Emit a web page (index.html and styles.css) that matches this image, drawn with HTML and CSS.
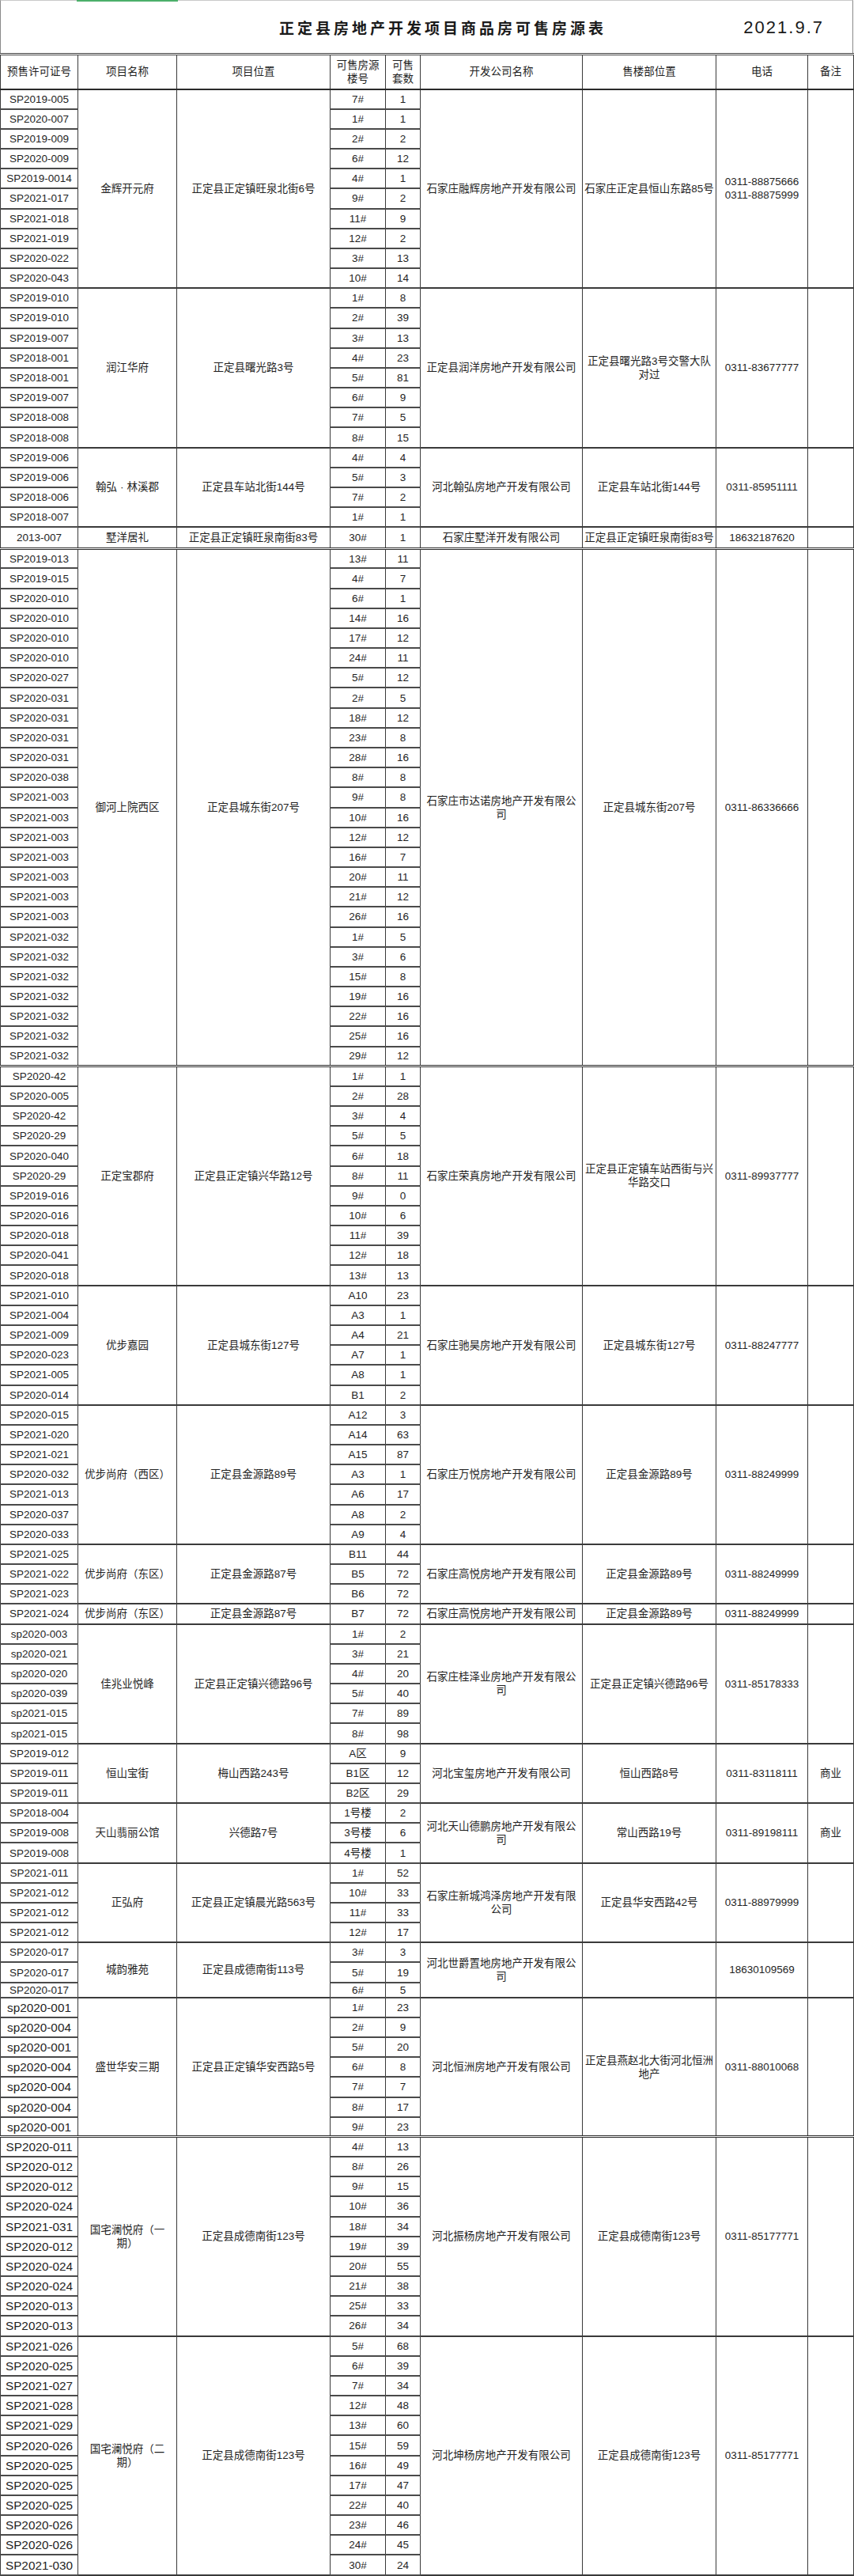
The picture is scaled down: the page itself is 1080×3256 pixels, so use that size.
FILE: index.html
```html
<!DOCTYPE html>
<html lang="zh-CN">
<head>
<meta charset="utf-8">
<title>正定县房地产开发项目商品房可售房源表</title>
<link rel="stylesheet" href="styles.css">
</head>
<body>
<div class="page">
  <div class="titlebar">
    <span class="tab-mark"></span>
    <h1 class="title">正定县房地产开发项目商品房可售房源表</h1>
    <span class="date">2021.9.7</span>
  </div>
  <table class="sheet">
    <colgroup>
      <col class="w-code"><col class="w-name"><col class="w-loc"><col class="w-bld"><col class="w-cnt"><col class="w-co"><col class="w-sale"><col class="w-tel"><col class="w-note">
    </colgroup>
    <thead>
      <tr><th>预售许可证号</th><th>项目名称</th><th>项目位置</th><th>可售房源<br>楼号</th><th>可售<br>套数</th><th>开发公司名称</th><th>售楼部位置</th><th>电话</th><th>备注</th></tr>
    </thead>
    <tbody>
      <tr><td class="code">SP2019-005</td><td rowspan="10">金辉开元府</td><td rowspan="10">正定县正定镇旺泉北街6号</td><td class="bld">7#</td><td class="cnt">1</td><td rowspan="10">石家庄融辉房地产开发有限公司</td><td rowspan="10">石家庄正定县恒山东路85号</td><td rowspan="10">0311-88875666<br>0311-88875999</td><td rowspan="10"></td></tr>
      <tr><td class="code">SP2020-007</td><td class="bld">1#</td><td class="cnt">1</td></tr>
      <tr><td class="code">SP2019-009</td><td class="bld">2#</td><td class="cnt">2</td></tr>
      <tr><td class="code">SP2020-009</td><td class="bld">6#</td><td class="cnt">12</td></tr>
      <tr><td class="code">SP2019-0014</td><td class="bld">4#</td><td class="cnt">1</td></tr>
      <tr><td class="code">SP2021-017</td><td class="bld">9#</td><td class="cnt">2</td></tr>
      <tr><td class="code">SP2021-018</td><td class="bld">11#</td><td class="cnt">9</td></tr>
      <tr><td class="code">SP2021-019</td><td class="bld">12#</td><td class="cnt">2</td></tr>
      <tr><td class="code">SP2020-022</td><td class="bld">3#</td><td class="cnt">13</td></tr>
      <tr><td class="code">SP2020-043</td><td class="bld">10#</td><td class="cnt">14</td></tr>
    </tbody>
    <tbody class="grp">
      <tr><td class="code">SP2019-010</td><td rowspan="8">润江华府</td><td rowspan="8">正定县曙光路3号</td><td class="bld">1#</td><td class="cnt">8</td><td rowspan="8">正定县润洋房地产开发有限公司</td><td rowspan="8">正定县曙光路3号交警大队<br>对过</td><td rowspan="8">0311-83677777</td><td rowspan="8"></td></tr>
      <tr><td class="code">SP2019-010</td><td class="bld">2#</td><td class="cnt">39</td></tr>
      <tr><td class="code">SP2019-007</td><td class="bld">3#</td><td class="cnt">13</td></tr>
      <tr><td class="code">SP2018-001</td><td class="bld">4#</td><td class="cnt">23</td></tr>
      <tr><td class="code">SP2018-001</td><td class="bld">5#</td><td class="cnt">81</td></tr>
      <tr><td class="code">SP2019-007</td><td class="bld">6#</td><td class="cnt">9</td></tr>
      <tr><td class="code">SP2018-008</td><td class="bld">7#</td><td class="cnt">5</td></tr>
      <tr><td class="code">SP2018-008</td><td class="bld">8#</td><td class="cnt">15</td></tr>
    </tbody>
    <tbody class="grp">
      <tr><td class="code">SP2019-006</td><td rowspan="4">翰弘<span class="dot">·</span>林溪郡</td><td rowspan="4">正定县车站北街144号</td><td class="bld">4#</td><td class="cnt">4</td><td rowspan="4">河北翰弘房地产开发有限公司</td><td rowspan="4">正定县车站北街144号</td><td rowspan="4">0311-85951111</td><td rowspan="4"></td></tr>
      <tr><td class="code">SP2019-006</td><td class="bld">5#</td><td class="cnt">3</td></tr>
      <tr><td class="code">SP2018-006</td><td class="bld">7#</td><td class="cnt">2</td></tr>
      <tr><td class="code">SP2018-007</td><td class="bld">1#</td><td class="cnt">1</td></tr>
    </tbody>
    <tbody class="grp">
      <tr class="tall"><td class="code">2013-007</td><td>墅洋居礼</td><td>正定县正定镇旺泉南街83号</td><td class="bld">30#</td><td class="cnt">1</td><td>石家庄墅洋开发有限公司</td><td>正定县正定镇旺泉南街83号</td><td>18632187620</td><td></td></tr>
    </tbody>
    <tbody class="dbl">
      <tr><td class="code">SP2019-013</td><td rowspan="26">御河上院西区</td><td rowspan="26">正定县城东街207号</td><td class="bld">13#</td><td class="cnt">11</td><td rowspan="26">石家庄市达诺房地产开发有限公<br>司</td><td rowspan="26">正定县城东街207号</td><td rowspan="26">0311-86336666</td><td rowspan="26"></td></tr>
      <tr><td class="code">SP2019-015</td><td class="bld">4#</td><td class="cnt">7</td></tr>
      <tr><td class="code">SP2020-010</td><td class="bld">6#</td><td class="cnt">1</td></tr>
      <tr><td class="code">SP2020-010</td><td class="bld">14#</td><td class="cnt">16</td></tr>
      <tr><td class="code">SP2020-010</td><td class="bld">17#</td><td class="cnt">12</td></tr>
      <tr><td class="code">SP2020-010</td><td class="bld">24#</td><td class="cnt">11</td></tr>
      <tr><td class="code">SP2020-027</td><td class="bld">5#</td><td class="cnt">12</td></tr>
      <tr><td class="code">SP2020-031</td><td class="bld">2#</td><td class="cnt">5</td></tr>
      <tr><td class="code">SP2020-031</td><td class="bld">18#</td><td class="cnt">12</td></tr>
      <tr><td class="code">SP2020-031</td><td class="bld">23#</td><td class="cnt">8</td></tr>
      <tr><td class="code">SP2020-031</td><td class="bld">28#</td><td class="cnt">16</td></tr>
      <tr><td class="code">SP2020-038</td><td class="bld">8#</td><td class="cnt">8</td></tr>
      <tr><td class="code">SP2021-003</td><td class="bld">9#</td><td class="cnt">8</td></tr>
      <tr><td class="code">SP2021-003</td><td class="bld">10#</td><td class="cnt">16</td></tr>
      <tr><td class="code">SP2021-003</td><td class="bld">12#</td><td class="cnt">12</td></tr>
      <tr><td class="code">SP2021-003</td><td class="bld">16#</td><td class="cnt">7</td></tr>
      <tr><td class="code">SP2021-003</td><td class="bld">20#</td><td class="cnt">11</td></tr>
      <tr><td class="code">SP2021-003</td><td class="bld">21#</td><td class="cnt">12</td></tr>
      <tr><td class="code">SP2021-003</td><td class="bld">26#</td><td class="cnt">16</td></tr>
      <tr><td class="code">SP2021-032</td><td class="bld">1#</td><td class="cnt">5</td></tr>
      <tr><td class="code">SP2021-032</td><td class="bld">3#</td><td class="cnt">6</td></tr>
      <tr><td class="code">SP2021-032</td><td class="bld">15#</td><td class="cnt">8</td></tr>
      <tr><td class="code">SP2021-032</td><td class="bld">19#</td><td class="cnt">16</td></tr>
      <tr><td class="code">SP2021-032</td><td class="bld">22#</td><td class="cnt">16</td></tr>
      <tr><td class="code">SP2021-032</td><td class="bld">25#</td><td class="cnt">16</td></tr>
      <tr><td class="code">SP2021-032</td><td class="bld">29#</td><td class="cnt">12</td></tr>
    </tbody>
    <tbody class="dbl">
      <tr><td class="code">SP2020-42</td><td rowspan="11">正定宝郡府</td><td rowspan="11">正定县正定镇兴华路12号</td><td class="bld">1#</td><td class="cnt">1</td><td rowspan="11">石家庄荣真房地产开发有限公司</td><td rowspan="11">正定县正定镇车站西街与兴<br>华路交口</td><td rowspan="11">0311-89937777</td><td rowspan="11"></td></tr>
      <tr><td class="code">SP2020-005</td><td class="bld">2#</td><td class="cnt">28</td></tr>
      <tr><td class="code">SP2020-42</td><td class="bld">3#</td><td class="cnt">4</td></tr>
      <tr><td class="code">SP2020-29</td><td class="bld">5#</td><td class="cnt">5</td></tr>
      <tr><td class="code">SP2020-040</td><td class="bld">6#</td><td class="cnt">18</td></tr>
      <tr><td class="code">SP2020-29</td><td class="bld">8#</td><td class="cnt">11</td></tr>
      <tr><td class="code">SP2019-016</td><td class="bld">9#</td><td class="cnt">0</td></tr>
      <tr><td class="code">SP2020-016</td><td class="bld">10#</td><td class="cnt">6</td></tr>
      <tr><td class="code">SP2020-018</td><td class="bld">11#</td><td class="cnt">39</td></tr>
      <tr><td class="code">SP2020-041</td><td class="bld">12#</td><td class="cnt">18</td></tr>
      <tr><td class="code">SP2020-018</td><td class="bld">13#</td><td class="cnt">13</td></tr>
    </tbody>
    <tbody class="grp">
      <tr><td class="code">SP2021-010</td><td rowspan="6">优步嘉园</td><td rowspan="6">正定县城东街127号</td><td class="bld">A10</td><td class="cnt">23</td><td rowspan="6">石家庄驰昊房地产开发有限公司</td><td rowspan="6">正定县城东街127号</td><td rowspan="6">0311-88247777</td><td rowspan="6"></td></tr>
      <tr><td class="code">SP2021-004</td><td class="bld">A3</td><td class="cnt">1</td></tr>
      <tr><td class="code">SP2021-009</td><td class="bld">A4</td><td class="cnt">21</td></tr>
      <tr><td class="code">SP2020-023</td><td class="bld">A7</td><td class="cnt">1</td></tr>
      <tr><td class="code">SP2021-005</td><td class="bld">A8</td><td class="cnt">1</td></tr>
      <tr><td class="code">SP2020-014</td><td class="bld">B1</td><td class="cnt">2</td></tr>
    </tbody>
    <tbody class="grp">
      <tr><td class="code">SP2020-015</td><td rowspan="7">优步尚府（西区）</td><td rowspan="7">正定县金源路89号</td><td class="bld">A12</td><td class="cnt">3</td><td rowspan="7">石家庄万悦房地产开发有限公司</td><td rowspan="7">正定县金源路89号</td><td rowspan="7">0311-88249999</td><td rowspan="7"></td></tr>
      <tr><td class="code">SP2021-020</td><td class="bld">A14</td><td class="cnt">63</td></tr>
      <tr><td class="code">SP2021-021</td><td class="bld">A15</td><td class="cnt">87</td></tr>
      <tr><td class="code">SP2020-032</td><td class="bld">A3</td><td class="cnt">1</td></tr>
      <tr><td class="code">SP2021-013</td><td class="bld">A6</td><td class="cnt">17</td></tr>
      <tr><td class="code">SP2020-037</td><td class="bld">A8</td><td class="cnt">2</td></tr>
      <tr><td class="code">SP2020-033</td><td class="bld">A9</td><td class="cnt">4</td></tr>
    </tbody>
    <tbody class="grp">
      <tr><td class="code">SP2021-025</td><td rowspan="3">优步尚府（东区）</td><td rowspan="3">正定县金源路87号</td><td class="bld">B11</td><td class="cnt">44</td><td rowspan="3">石家庄高悦房地产开发有限公司</td><td rowspan="3">正定县金源路89号</td><td rowspan="3">0311-88249999</td><td rowspan="3"></td></tr>
      <tr><td class="code">SP2021-022</td><td class="bld">B5</td><td class="cnt">72</td></tr>
      <tr><td class="code">SP2021-023</td><td class="bld">B6</td><td class="cnt">72</td></tr>
    </tbody>
    <tbody class="grp">
      <tr><td class="code">SP2021-024</td><td>优步尚府（东区）</td><td>正定县金源路87号</td><td class="bld">B7</td><td class="cnt">72</td><td>石家庄高悦房地产开发有限公司</td><td>正定县金源路89号</td><td>0311-88249999</td><td></td></tr>
    </tbody>
    <tbody class="grp">
      <tr><td class="code">sp2020-003</td><td rowspan="6">佳兆业悦峰</td><td rowspan="6">正定县正定镇兴德路96号</td><td class="bld">1#</td><td class="cnt">2</td><td rowspan="6">石家庄桂泽业房地产开发有限公<br>司</td><td rowspan="6">正定县正定镇兴德路96号</td><td rowspan="6">0311-85178333</td><td rowspan="6"></td></tr>
      <tr><td class="code">sp2020-021</td><td class="bld">3#</td><td class="cnt">21</td></tr>
      <tr><td class="code">sp2020-020</td><td class="bld">4#</td><td class="cnt">20</td></tr>
      <tr><td class="code">sp2020-039</td><td class="bld">5#</td><td class="cnt">40</td></tr>
      <tr><td class="code">sp2021-015</td><td class="bld">7#</td><td class="cnt">89</td></tr>
      <tr><td class="code">sp2021-015</td><td class="bld">8#</td><td class="cnt">98</td></tr>
    </tbody>
    <tbody class="grp">
      <tr><td class="code">SP2019-012</td><td rowspan="3">恒山宝街</td><td rowspan="3">梅山西路243号</td><td class="bld">A区</td><td class="cnt">9</td><td rowspan="3">河北宝玺房地产开发有限公司</td><td rowspan="3">恒山西路8号</td><td rowspan="3">0311-83118111</td><td rowspan="3" class="note">商业</td></tr>
      <tr><td class="code">SP2019-011</td><td class="bld">B1区</td><td class="cnt">12</td></tr>
      <tr><td class="code">SP2019-011</td><td class="bld">B2区</td><td class="cnt">29</td></tr>
    </tbody>
    <tbody class="grp">
      <tr><td class="code">SP2018-004</td><td rowspan="3">天山翡丽公馆</td><td rowspan="3">兴德路7号</td><td class="bld">1号楼</td><td class="cnt">2</td><td rowspan="3">河北天山德鹏房地产开发有限公<br>司</td><td rowspan="3">常山西路19号</td><td rowspan="3">0311-89198111</td><td rowspan="3" class="note">商业</td></tr>
      <tr><td class="code">SP2019-008</td><td class="bld">3号楼</td><td class="cnt">6</td></tr>
      <tr><td class="code">SP2019-008</td><td class="bld">4号楼</td><td class="cnt">1</td></tr>
    </tbody>
    <tbody class="grp">
      <tr><td class="code">SP2021-011</td><td rowspan="4">正弘府</td><td rowspan="4">正定县正定镇晨光路563号</td><td class="bld">1#</td><td class="cnt">52</td><td rowspan="4">石家庄新城鸿泽房地产开发有限<br>公司</td><td rowspan="4">正定县华安西路42号</td><td rowspan="4">0311-88979999</td><td rowspan="4"></td></tr>
      <tr><td class="code">SP2021-012</td><td class="bld">10#</td><td class="cnt">33</td></tr>
      <tr><td class="code">SP2021-012</td><td class="bld">11#</td><td class="cnt">33</td></tr>
      <tr><td class="code">SP2021-012</td><td class="bld">12#</td><td class="cnt">17</td></tr>
    </tbody>
    <tbody class="grp">
      <tr><td class="code">SP2020-017</td><td rowspan="3">城韵雅苑</td><td rowspan="3">正定县成德南街113号</td><td class="bld">3#</td><td class="cnt">3</td><td rowspan="3">河北世爵置地房地产开发有限公<br>司</td><td rowspan="3"></td><td rowspan="3">18630109569</td><td rowspan="3"></td></tr>
      <tr><td class="code">SP2020-017</td><td class="bld">5#</td><td class="cnt">19</td></tr>
      <tr class="short"><td class="code">SP2020-017</td><td class="bld">6#</td><td class="cnt">5</td></tr>
    </tbody>
    <tbody class="grp">
      <tr><td class="code big">sp2020-001</td><td rowspan="7">盛世华安三期</td><td rowspan="7">正定县正定镇华安西路5号</td><td class="bld">1#</td><td class="cnt">23</td><td rowspan="7">河北恒洲房地产开发有限公司</td><td rowspan="7">正定县燕赵北大街河北恒洲<br>地产</td><td rowspan="7">0311-88010068</td><td rowspan="7"></td></tr>
      <tr><td class="code big">sp2020-004</td><td class="bld">2#</td><td class="cnt">9</td></tr>
      <tr><td class="code big">sp2020-001</td><td class="bld">5#</td><td class="cnt">20</td></tr>
      <tr><td class="code big">sp2020-004</td><td class="bld">6#</td><td class="cnt">8</td></tr>
      <tr><td class="code big">sp2020-004</td><td class="bld">7#</td><td class="cnt">7</td></tr>
      <tr><td class="code big">sp2020-004</td><td class="bld">8#</td><td class="cnt">17</td></tr>
      <tr><td class="code big">sp2020-001</td><td class="bld">9#</td><td class="cnt">23</td></tr>
    </tbody>
    <tbody class="dbl">
      <tr><td class="code big">SP2020-011</td><td rowspan="10">国宅澜悦府（一<br>期）</td><td rowspan="10">正定县成德南街123号</td><td class="bld">4#</td><td class="cnt">13</td><td rowspan="10">河北振杨房地产开发有限公司</td><td rowspan="10">正定县成德南街123号</td><td rowspan="10">0311-85177771</td><td rowspan="10"></td></tr>
      <tr><td class="code big">SP2020-012</td><td class="bld">8#</td><td class="cnt">26</td></tr>
      <tr><td class="code big">SP2020-012</td><td class="bld">9#</td><td class="cnt">15</td></tr>
      <tr><td class="code big">SP2020-024</td><td class="bld">10#</td><td class="cnt">36</td></tr>
      <tr><td class="code big">SP2021-031</td><td class="bld">18#</td><td class="cnt">34</td></tr>
      <tr><td class="code big">SP2020-012</td><td class="bld">19#</td><td class="cnt">39</td></tr>
      <tr><td class="code big">SP2020-024</td><td class="bld">20#</td><td class="cnt">55</td></tr>
      <tr><td class="code big">SP2020-024</td><td class="bld">21#</td><td class="cnt">38</td></tr>
      <tr><td class="code big">SP2020-013</td><td class="bld">25#</td><td class="cnt">33</td></tr>
      <tr><td class="code big">SP2020-013</td><td class="bld">26#</td><td class="cnt">34</td></tr>
    </tbody>
    <tbody class="grp">
      <tr><td class="code big">SP2021-026</td><td rowspan="12">国宅澜悦府（二<br>期）</td><td rowspan="12">正定县成德南街123号</td><td class="bld">5#</td><td class="cnt">68</td><td rowspan="12">河北坤杨房地产开发有限公司</td><td rowspan="12">正定县成德南街123号</td><td rowspan="12">0311-85177771</td><td rowspan="12"></td></tr>
      <tr><td class="code big">SP2020-025</td><td class="bld">6#</td><td class="cnt">39</td></tr>
      <tr><td class="code big">SP2021-027</td><td class="bld">7#</td><td class="cnt">34</td></tr>
      <tr><td class="code big">SP2021-028</td><td class="bld">12#</td><td class="cnt">48</td></tr>
      <tr><td class="code big">SP2021-029</td><td class="bld">13#</td><td class="cnt">60</td></tr>
      <tr><td class="code big">SP2020-026</td><td class="bld">15#</td><td class="cnt">59</td></tr>
      <tr><td class="code big">SP2020-025</td><td class="bld">16#</td><td class="cnt">49</td></tr>
      <tr><td class="code big">SP2020-025</td><td class="bld">17#</td><td class="cnt">47</td></tr>
      <tr><td class="code big">SP2020-025</td><td class="bld">22#</td><td class="cnt">40</td></tr>
      <tr><td class="code big">SP2020-026</td><td class="bld">23#</td><td class="cnt">46</td></tr>
      <tr><td class="code big">SP2020-026</td><td class="bld">24#</td><td class="cnt">45</td></tr>
      <tr><td class="code big">SP2021-030</td><td class="bld">30#</td><td class="cnt">24</td></tr>
    </tbody>
    <tbody class="grp tail">
      <tr><td></td><td></td><td></td><td></td><td></td><td></td><td></td><td></td><td></td></tr>
    </tbody>
  </table>
</div>
</body>
</html>
```

FILE: styles.css
```css
html, body {
  margin: 0;
  padding: 0;
  background: #ffffff;
}

body {
  font-family: "Liberation Sans", "Noto Sans CJK SC", sans-serif;
  color: #1f1f1f;
}

.page {
  width: 1080px;
}

.titlebar {
  position: relative;
  box-sizing: border-box;
  width: 1079px;
  height: 67px;
  border-top: 1px solid #c9c9c9;
  border-left: 1px solid #8a8a8a;
  border-right: 1px solid #8a8a8a;
  display: flex;
  align-items: center;
  padding-left: 352px;
  padding-top: 2px;
}

.tab-mark {
  position: absolute;
  left: 96px;
  top: -1px;
  width: 128px;
  height: 2px;
  background: #4caf6a;
}

.title {
  margin: 0;
  font-family: "Noto Sans CJK SC", sans-serif;
  font-size: 19px;
  font-weight: 700;
  letter-spacing: 4px;
  line-height: 26px;
  color: #1a1a1a;
}

.date {
  margin-left: auto;
  margin-right: 36px;
  font-family: "Liberation Sans", sans-serif;
  font-size: 22px;
  letter-spacing: 2px;
  color: #1a1a1a;
}

.sheet {
  border-collapse: collapse;
  table-layout: fixed;
  width: 1079px;
}

.w-code { width: 98px; }
.w-name { width: 125px; }
.w-loc  { width: 194px; }
.w-bld  { width: 70px; }
.w-cnt  { width: 44px; }
.w-co   { width: 205px; }
.w-sale { width: 169px; }
.w-tel  { width: 116px; }
.w-note { width: 58px; }

.sheet th,
.sheet td {
  border: 1px solid #3a3a3a;
  padding: 0 1px;
  text-align: center;
  vertical-align: middle;
  font-size: 13.5px;
  line-height: 17px;
  font-weight: 400;
  white-space: nowrap;
  overflow: hidden;
}

.sheet thead tr {
  height: 44px;
}

.sheet thead th {
  border-top: 3px double #444;
  border-bottom: 2px solid #2a2a2a;
}

.sheet tbody tr {
  height: 25.18px;
}

.sheet tbody tr.tall {
  height: 27px;
}

.sheet tbody tr.short {
  height: 18px;
}

.sheet tbody.grp {
  border-top: 2px solid #3a3a3a;
}

.sheet tbody.dbl {
  border-top: 3px double #2a2a2a;
}

.sheet td.code,
.sheet td.bld,
.sheet td.cnt {
  border-bottom: 2px solid #4a4a4a;
}

.sheet td.big {
  font-size: 15.3px;
}

.sheet tbody.tail tr {
  height: 6px;
}

.sheet tbody.tail td {
  border-bottom: none;
}

.dot {
  padding: 0 4px;
}

.note {
  font-size: 13.5px;
}
```
